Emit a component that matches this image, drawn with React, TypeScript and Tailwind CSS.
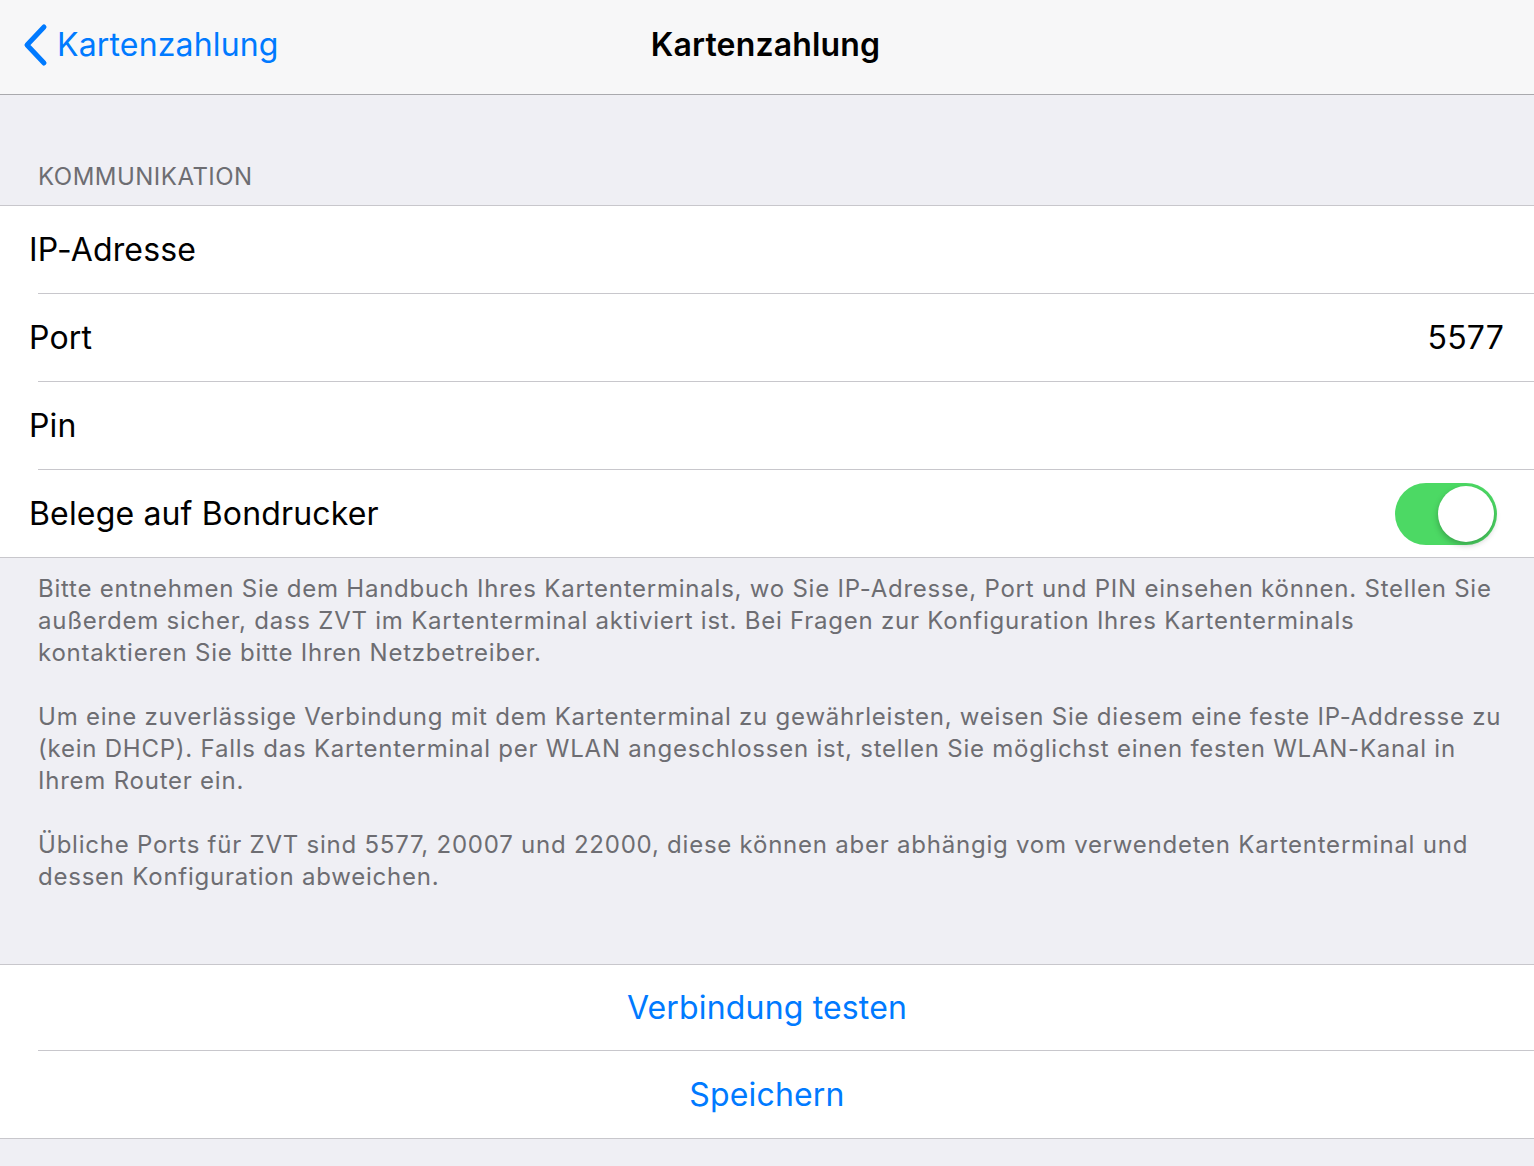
import React, { useState } from 'react';

const font = { fontFamily: 'Inter, "Noto Sans", "Liberation Sans", sans-serif' };

function Row({ label, children, last }: { label: string; children?: React.ReactNode; last?: boolean }) {
  return (
    <div className="bg-white">
      <div className="h-[87px] flex items-center pl-[29px] pr-[37px]">
        <span className="text-[32px] text-black flex-1">{label}</span>
        {children}
      </div>
      {!last && <div className="ml-[38px] border-b border-[#c8c7cc]" />}
    </div>
  );
}

export default function App() {
  const [printReceipts, setPrintReceipts] = useState(true);

  return (
    <div className="min-h-[1166px] bg-[#efeff4] tracking-[0.01em]" style={font}>
      {/* nav bar */}
      <div className="h-[95px] pb-[4px] bg-[#f7f7f8] border-b border-[#a9a9ad] relative flex items-center justify-center">
        <button className="absolute left-[20px] top-0 h-[90px] flex items-center gap-[8px] text-[#007aff]">
          <svg width="30" height="44" viewBox="0 0 30 44" fill="none">
            <path d="M24 4 L7 22 L24 40" stroke="#007aff" strokeWidth="5" strokeLinecap="round" strokeLinejoin="round" />
          </svg>
          <span className="text-[32px] -ml-[1px]">Kartenzahlung</span>
        </button>
        <h1 className="text-[32px] font-semibold text-black -ml-[3px]">Kartenzahlung</h1>
      </div>

      {/* section header */}
      <div className="pt-[64px] pb-[10px] pl-[38px] text-[24px] text-[#6d6d72] uppercase tracking-[0.02em]">Kommunikation</div>

      <div className="border-y border-[#c8c7cc]">
        <Row label="IP-Adresse" />
        <Row label="Port">
          <span className="text-[32px] text-black -mr-[7px]">5577</span>
        </Row>
        <Row label="Pin" />
        <Row label="Belege auf Bondrucker" last>
          <button
            onClick={() => setPrintReceipts(!printReceipts)}
            className={`w-[102px] h-[62px] rounded-full relative ${printReceipts ? 'bg-[#4cd964]' : 'bg-[#e5e5ea]'}`}
          >
            <span
              className={`absolute top-[3px] w-[56px] h-[56px] rounded-full bg-white shadow-[0_3px_6px_rgba(0,0,0,0.25)] ${printReceipts ? 'left-[43px]' : 'left-[3px]'}`}
            />
          </button>
        </Row>
      </div>

      {/* footer */}
      <div className="pl-[38px] pr-[20px] pt-[15px] text-[24px] leading-[32px] text-[#6d6d72] tracking-[0.032em] whitespace-nowrap space-y-[32px]">
        <p>
          Bitte entnehmen Sie dem Handbuch Ihres Kartenterminals, wo Sie IP-Adresse, Port und PIN einsehen können. Stellen Sie
          <br />
          außerdem sicher, dass ZVT im Kartenterminal aktiviert ist. Bei Fragen zur Konfiguration Ihres Kartenterminals
          <br />
          kontaktieren Sie bitte Ihren Netzbetreiber.
        </p>
        <p>
          Um eine zuverlässige Verbindung mit dem Kartenterminal zu gewährleisten, weisen Sie diesem eine feste IP-Addresse zu
          <br />
          (kein DHCP). Falls das Kartenterminal per WLAN angeschlossen ist, stellen Sie möglichst einen festen WLAN-Kanal in
          <br />
          Ihrem Router ein.
        </p>
        <p>
          Übliche Ports für ZVT sind 5577, 20007 und 22000, diese können aber abhängig vom verwendeten Kartenterminal und
          <br />
          dessen Konfiguration abweichen.
        </p>
      </div>

      {/* actions */}
      <div className="mt-[71px] border-y border-[#c8c7cc] bg-white">
        <button className="w-full h-[85px] text-[32px] text-[#007aff] tracking-[0.005em]">Verbindung testen</button>
        <div className="ml-[38px] border-b border-[#c8c7cc]" />
        <button className="w-full h-[87px] text-[32px] text-[#007aff] tracking-[0.005em]">Speichern</button>
      </div>
    </div>
  );
}
